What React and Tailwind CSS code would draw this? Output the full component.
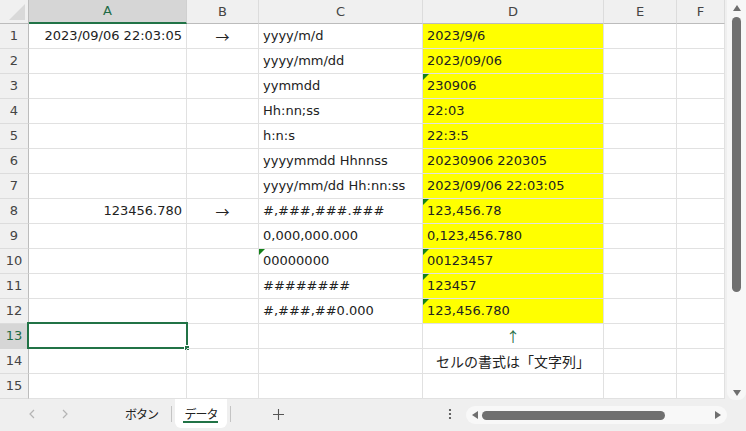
import React from 'react';

const rows = [
  { a: '2023/09/06 22:03:05', b: '→', c: 'yyyy/m/d', d: '2023/9/6' },
  { c: 'yyyy/mm/dd', d: '2023/09/06' },
  { c: 'yymmdd', d: '230906', dTri: true },
  { c: 'Hh:nn;ss', d: '22:03' },
  { c: 'h:n:s', d: '22:3:5' },
  { c: 'yyyymmdd Hhnnss', d: '20230906 220305' },
  { c: 'yyyy/mm/dd Hh:nn:ss', d: '2023/09/06 22:03:05' },
  { a: '123456.780', b: '→', c: '#,###,###.###', d: '123,456.78', dTri: true },
  { c: '0,000,000.000', d: '0,123,456.780' },
  { c: '00000000', cTri: true, d: '00123457', dTri: true },
  { c: '########', d: '123457', dTri: true },
  { c: '#,###,##0.000', d: '123,456.780', dTri: true },
  { arrow: true, selected: true },
  { note: 'セルの書式は「文字列」' },
  {},
];

// little green "number stored as text" flag
function Tri() {
  return (
    <svg className="absolute left-0 top-0" width="6" height="6" viewBox="0 0 6 6">
      <polygon points="0,0 6,0 0,6" fill="#15801a" />
    </svg>
  );
}

function Row({ n, r }) {
  const cell = 'relative h-[25px] border-r border-b border-[#e1e1e1] flex items-center px-[4px] whitespace-nowrap';
  return (
    <div className="grid grid-cols-[29px_158px_72px_164px_181px_73px_48px]">
      <div
        className={
          'h-[25px] border-r border-b flex items-center justify-center ' +
          (r.selected
            ? 'bg-[#d6d6d6] text-[#1e6b45] border-r-[#bcbcbc] border-b-[#d6d6d6]'
            : 'bg-[#f0f0f0] text-[#444] border-r-[#bcbcbc] border-b-[#dcdcdc]')
        }
      >
        {n}
      </div>
      <div className={cell + ' justify-end'}>
        {r.a}
        {r.selected && (
          <div className="absolute -left-[2px] -top-[2px] w-[161px] h-[27px] border-2 border-[#217346]">
            <div className="absolute -right-[4px] -bottom-[4px] w-[6px] h-[6px] bg-[#217346] border border-white" />
          </div>
        )}
      </div>
      <div className={cell + " justify-center text-[14px] font-['Noto_Sans_CJK_JP',sans-serif]"}>{r.b}</div>
      <div className={cell}>
        {r.cTri && <Tri />}
        {r.c}
      </div>
      <div className={cell + (n <= 12 ? ' bg-[#ffff00]' : '') + (r.arrow || r.note ? ' justify-center' : '')}>
        {r.dTri && <Tri />}
        {r.d}
        {r.arrow && <span className="text-[14px] text-[#1f6e44] font-['Noto_Sans_CJK_JP',sans-serif]">↑</span>}
        {r.note && <span className="text-[14px] font-['Noto_Sans_CJK_JP',sans-serif]">{r.note}</span>}
      </div>
      <div className={cell} />
      <div className={cell} />
    </div>
  );
}

export default function App() {
  return (
    <div className="w-[746px] h-[431px] overflow-hidden bg-[#efefef] text-[13px] text-[#222] font-['DejaVu_Sans','Noto_Sans_CJK_JP',sans-serif] flex flex-col">
      <div className="flex h-[399px]">
        <div className="w-[725px] bg-white">
          {/* column headers */}
          <div className="grid grid-cols-[29px_158px_72px_164px_181px_73px_48px] h-[24px] bg-[#f0f0f0] text-[#444]">
            <div className="relative border-r border-b border-[#bcbcbc]">
              <svg className="absolute left-0 top-0" width="28" height="23" viewBox="0 0 28 23">
                <polygon points="9,20 25,20 25,4" fill="#d9d9d9" />
              </svg>
            </div>
            <div className="flex items-center justify-center bg-[#d6d6d6] text-[#1e6b45] border-r border-[#d0d0d0] border-b-2 border-b-[#217346]">A</div>
            <div className="flex items-center justify-center border-r border-[#dcdcdc] border-b border-b-[#bcbcbc]">B</div>
            <div className="flex items-center justify-center border-r border-[#dcdcdc] border-b border-b-[#bcbcbc]">C</div>
            <div className="flex items-center justify-center border-r border-[#dcdcdc] border-b border-b-[#bcbcbc]">D</div>
            <div className="flex items-center justify-center border-r border-[#dcdcdc] border-b border-b-[#bcbcbc]">E</div>
            <div className="flex items-center justify-center border-r border-[#dcdcdc] border-b border-b-[#bcbcbc]">F</div>
          </div>
          {rows.map((r, i) => (
            <Row key={i} n={i + 1} r={r} />
          ))}
        </div>
        {/* vertical scrollbar */}
        <div className="flex-1 pl-[2px] bg-[#efefef]">
          <div className="h-[400px] bg-[#f7f7f7] rounded-b-[8px] flex flex-col items-center pt-[4px] pb-[3px]">
            <svg width="10" height="8" viewBox="0 0 10 8"><polygon points="5,1 9,7 1,7" fill="#6f6f6f" /></svg>
            <div className="w-[9px] h-[275px] mt-[5px] rounded-full bg-[#707070]" />
            <div className="flex-1" />
            <svg width="10" height="8" viewBox="0 0 10 8"><polygon points="1,1 9,1 5,7" fill="#6f6f6f" /></svg>
          </div>
        </div>
      </div>

      {/* sheet tabs bar */}
      <div className="flex-1 flex items-start font-['Noto_Sans_CJK_JP',sans-serif]">
        <div className="w-[95px] h-[30px] flex items-center">
          <svg className="ml-[28px]" width="8" height="10" viewBox="0 0 8 10">
            <path d="M6 1L2 5l4 4" fill="none" stroke="#b4b4b4" strokeWidth="1.2" />
          </svg>
          <svg className="ml-[25px]" width="8" height="10" viewBox="0 0 8 10">
            <path d="M2 1l4 4-4 4" fill="none" stroke="#b4b4b4" strokeWidth="1.2" />
          </svg>
        </div>
        <div className="w-[76px] pl-[30px] h-[30px] flex items-center text-[12px] tracking-[-1px]">ボタン</div>
        <div className="w-px h-[16px] mt-[7px] bg-[#c4c4c4]" />
        <div className="relative w-[52px] h-[29px] ml-[3px] bg-white rounded-b-[6px] flex items-center justify-center text-[12px] tracking-[-1px]">
          データ
          <div className="absolute left-[8px] right-[9px] bottom-[5px] h-[2px] bg-[#217346]" />
        </div>
        <div className="w-px h-[16px] mt-[7px] ml-[3px] bg-[#c4c4c4]" />
        <div className="h-[30px] ml-[41px] flex items-center">
          <svg width="13" height="13" viewBox="0 0 13 13">
            <path d="M6.5 1v11M1 6.5h11" stroke="#555" strokeWidth="1.1" />
          </svg>
        </div>
        <div className="h-[30px] ml-[163px] flex items-center">
          <svg width="4" height="12" viewBox="0 0 4 12">
            <circle cx="2" cy="2" r="1.1" fill="#444" />
            <circle cx="2" cy="6" r="1.1" fill="#444" />
            <circle cx="2" cy="10" r="1.1" fill="#444" />
          </svg>
        </div>
        <div className="w-[261px] h-[18px] mt-[7px] ml-[14px] rounded-full bg-[#f8f8f8] flex items-center px-[5px]">
          <svg width="8" height="10" viewBox="0 0 8 10"><polygon points="1,5 7,1 7,9" fill="#6f6f6f" /></svg>
          <div className="w-[183px] h-[9px] ml-[3px] rounded-full bg-[#707070]" />
          <div className="flex-1" />
          <svg width="8" height="10" viewBox="0 0 8 10"><polygon points="1,1 7,5 1,9" fill="#6f6f6f" /></svg>
        </div>
      </div>
    </div>
  );
}
